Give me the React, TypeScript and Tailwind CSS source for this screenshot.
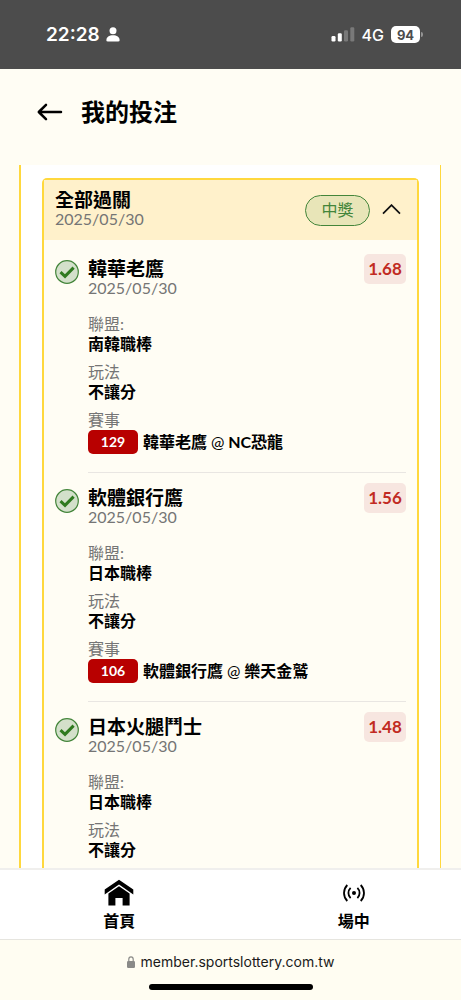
import React, { useState } from "react";

interface Bet {
  team: string;
  date: string;
  odds: string;
  league: string;
  play: string;
  code: string;
  away: string;
  home: string;
}

const bets: Bet[] = [
  { team: "韓華老鷹", date: "2025/05/30", odds: "1.68", league: "南韓職棒", play: "不讓分", code: "129", away: "韓華老鷹", home: "NC恐龍" },
  { team: "軟體銀行鷹", date: "2025/05/30", odds: "1.56", league: "日本職棒", play: "不讓分", code: "106", away: "軟體銀行鷹", home: "樂天金鷲" },
  { team: "日本火腿鬥士", date: "2025/05/30", odds: "1.48", league: "日本職棒", play: "不讓分", code: "", away: "", home: "" },
];

function StatusBar() {
  return (
    <div className="flex h-[69px] shrink-0 items-center justify-between bg-[#4c4c4c] pl-[46px] pr-[38px] font-['Inter',sans-serif] text-white">
      <div className="flex items-center gap-1.5">
        <span className="text-[19px] font-semibold leading-6">22:28</span>
        <svg width="14" height="15" viewBox="0 0 14 15" fill="currentColor" aria-hidden="true">
          <circle cx="7" cy="3.8" r="3.5" />
          <path d="M0.4 13.2C0.4 10.2 3.2 8.3 7 8.3s6.6 1.9 6.6 4.9c0 .8-.4 1.2-1.2 1.2H1.6C.8 14.4.4 14 .4 13.2Z" />
        </svg>
      </div>
      <div className="flex items-center gap-[7px]">
        <svg width="24" height="15" viewBox="0 0 24 15" fill="currentColor" aria-hidden="true">
          <rect x="0.5" y="9" width="4" height="5.5" rx="1.2" />
          <rect x="6.8" y="6.2" width="4" height="8.3" rx="1.2" />
          <rect x="13" y="3.3" width="4" height="11.2" rx="1.2" opacity="0.25" />
          <rect x="19.3" y="0.3" width="4" height="14.2" rx="1.2" opacity="0.25" />
        </svg>
        <span className="text-base font-medium leading-6">4G</span>
        <div className="flex items-center gap-px">
          <span className="flex h-[17px] w-[29px] items-center justify-center rounded-[5px] bg-white text-[13px] font-bold leading-4 text-[#4c4c4c]">
            94
          </span>
          <span className="h-[5px] w-[2px] rounded-r-full bg-[#949494]" />
        </div>
      </div>
    </div>
  );
}

function CheckMark() {
  return (
    <svg className="mt-1.5 shrink-0" width="24" height="24" viewBox="0 0 24 24" fill="none" role="img" aria-label="中獎">
      <circle cx="12" cy="12" r="11.3" fill="#d3e0ca" stroke="#43853a" strokeWidth="1.2" />
      <path d="M5.5 12.2 L10 16.4 L18.6 7.6" stroke="#2f7a1f" strokeWidth="3" />
    </svg>
  );
}

function Field({ label, children }: { label: string; children: React.ReactNode }) {
  return (
    <div>
      <dt className="text-base leading-5 text-[#757575]">{label}</dt>
      <dd className="text-base font-bold leading-5 text-black">{children}</dd>
    </div>
  );
}

function BetItem({ bet }: { bet: Bet }) {
  return (
    <li className="flex gap-[9px] px-[11px] pt-[10px]">
      <CheckMark />
      <div className="flex-1 border-b border-[#e9e6e2] pb-[18px]">
        <div className="flex items-start justify-between">
          <div className="pt-[5px]">
            <h3 className="text-[19px] font-bold leading-5 text-black">{bet.team}</h3>
            <p className="text-base leading-[18px] text-[#757575]">{bet.date}</p>
          </div>
          <span className="flex h-[30px] w-[42px] items-center justify-center rounded-[5px] bg-[#f7e6e0] text-[17px] font-bold text-[#c12a22]">
            {bet.odds}
          </span>
        </div>
        <dl className="flex flex-col gap-2 pt-[17px]">
          <Field label="聯盟:">{bet.league}</Field>
          <Field label="玩法">{bet.play}</Field>
          {bet.code && (
            <Field label="賽事">
              <span className="flex items-center gap-[5px]">
                <span className="flex h-6 w-[50px] items-center justify-center rounded-[5px] bg-[#b80000] text-[14px] text-white">
                  {bet.code}
                </span>
                <span>
                  {bet.away} <span className="font-normal">@</span> {bet.home}
                </span>
              </span>
            </Field>
          )}
        </dl>
      </div>
    </li>
  );
}

function BetCard() {
  const [open, setOpen] = useState(true);

  return (
    <section className="min-h-full rounded-t-[5px] border-2 border-b-0 border-[#ffd83d] bg-[#fffdf4]">
      <div className="flex items-center justify-between bg-[#fff1cb] py-[10px] pl-[11px] pr-4">
        <div className="pb-[2px]">
          <h2 className="text-[19px] font-bold leading-5 text-black">全部過關</h2>
          <p className="text-base leading-[18px] text-[#757575]">2025/05/30</p>
        </div>
        <div className="flex items-center gap-3">
          <span className="flex h-[31px] w-[65px] items-center justify-center rounded-full border border-[#43853a] bg-[#e8e5b8] text-base text-[#43853a]">
            中獎
          </span>
          <button type="button" aria-label="收合" aria-expanded={open} onClick={() => setOpen(!open)}>
            <svg className={open ? "" : "rotate-180"} width="19" height="12" viewBox="0 0 19 12" fill="none" stroke="#111" strokeWidth="1.7">
              <path d="M1 9.7 L9.5 1.1 L18 9.7" />
            </svg>
          </button>
        </div>
      </div>
      {open && (
        <ul className="pt-1">
          {bets.map((bet) => (
            <BetItem key={bet.team} bet={bet} />
          ))}
        </ul>
      )}
    </section>
  );
}

function TabBar() {
  return (
    <nav className="grid h-[72px] shrink-0 grid-cols-2 gap-5 border-b border-t-2 border-b-[#e6e5df] border-t-[#f0efed] bg-white pl-3 text-base font-bold leading-6 text-black">
      <a href="#home" className="flex flex-col items-center pt-[7px]">
        <span className="flex h-8 items-center">
          <svg width="30" height="28" viewBox="0 0 30 28" fill="currentColor" aria-hidden="true">
            <path d="M15 0.8 L29.3 10.6 V15.4 L15 5.6 L0.7 15.4 V10.6 Z" />
            <path d="M15 7.2 L25.6 14.6 V26.6 H18.6 V19 H11.4 V26.6 H4.4 V14.6 Z" />
          </svg>
        </span>
        首頁
      </a>
      <a href="#live" className="flex flex-col items-center pt-[7px]">
        <span className="flex h-8 items-center">
          <svg width="22" height="18" viewBox="0 0 22 18" fill="none" stroke="currentColor" strokeWidth="1.8" aria-hidden="true">
            <circle cx="11" cy="9" r="2" fill="currentColor" stroke="none" />
            <path d="M4.3 1 C-0.1 5.5 -0.1 12.5 4.3 17" />
            <path d="M7.6 3.8 C4.7 6.6 4.7 11.4 7.6 14.2" />
            <path d="M14.4 3.8 C17.3 6.6 17.3 11.4 14.4 14.2" />
            <path d="M17.7 1 C22.1 5.5 22.1 12.5 17.7 17" />
          </svg>
        </span>
        場中
      </a>
    </nav>
  );
}

function AddressBar() {
  return (
    <div className="flex h-[60px] shrink-0 flex-col items-center justify-between bg-[#fffdf2] pb-[10px] pt-3">
      <div className="flex items-center gap-1.5 font-['Inter',sans-serif] text-[14px] leading-5 text-[#1a1a1a]">
        <svg width="8" height="12" viewBox="0 0 8 12" aria-hidden="true">
          <path d="M1.8 5.5 V3.2 a2.2 2.4 0 0 1 4.4 0 V5.5" fill="none" stroke="#8a8a88" strokeWidth="1.2" />
          <rect x="0" y="5" width="8" height="7" rx="1.2" fill="#8a8a88" />
        </svg>
        member.sportslottery.com.tw
      </div>
      <div className="h-[6px] w-[164px] rounded-full bg-black" />
    </div>
  );
}

export default function App() {
  return (
    <div lang="zh-TW" className="flex h-screen flex-col overflow-hidden bg-[#fffdf4] font-['Lato','Noto_Sans_CJK_TC',sans-serif]">
      <StatusBar />
      <header className="flex h-24 shrink-0 items-center gap-[18px] pb-[10px] pl-[37px]">
        <button type="button" aria-label="返回">
          <svg width="26" height="18" viewBox="0 0 26 18" fill="none" stroke="#000" strokeWidth="2.5" strokeLinecap="round" strokeLinejoin="round">
            <path d="M24 9 H2 M9 1.8 L1.8 9 L9 16.2" />
          </svg>
        </button>
        <h1 className="text-[24px] font-bold leading-8 text-black">我的投注</h1>
      </header>
      <main className="ml-[19px] mr-5 min-h-0 flex-1 overflow-hidden border-l-2 border-r border-[#ffd83d] bg-white px-[21px] pt-[13px]">
        <BetCard />
      </main>
      <TabBar />
      <AddressBar />
    </div>
  );
}
